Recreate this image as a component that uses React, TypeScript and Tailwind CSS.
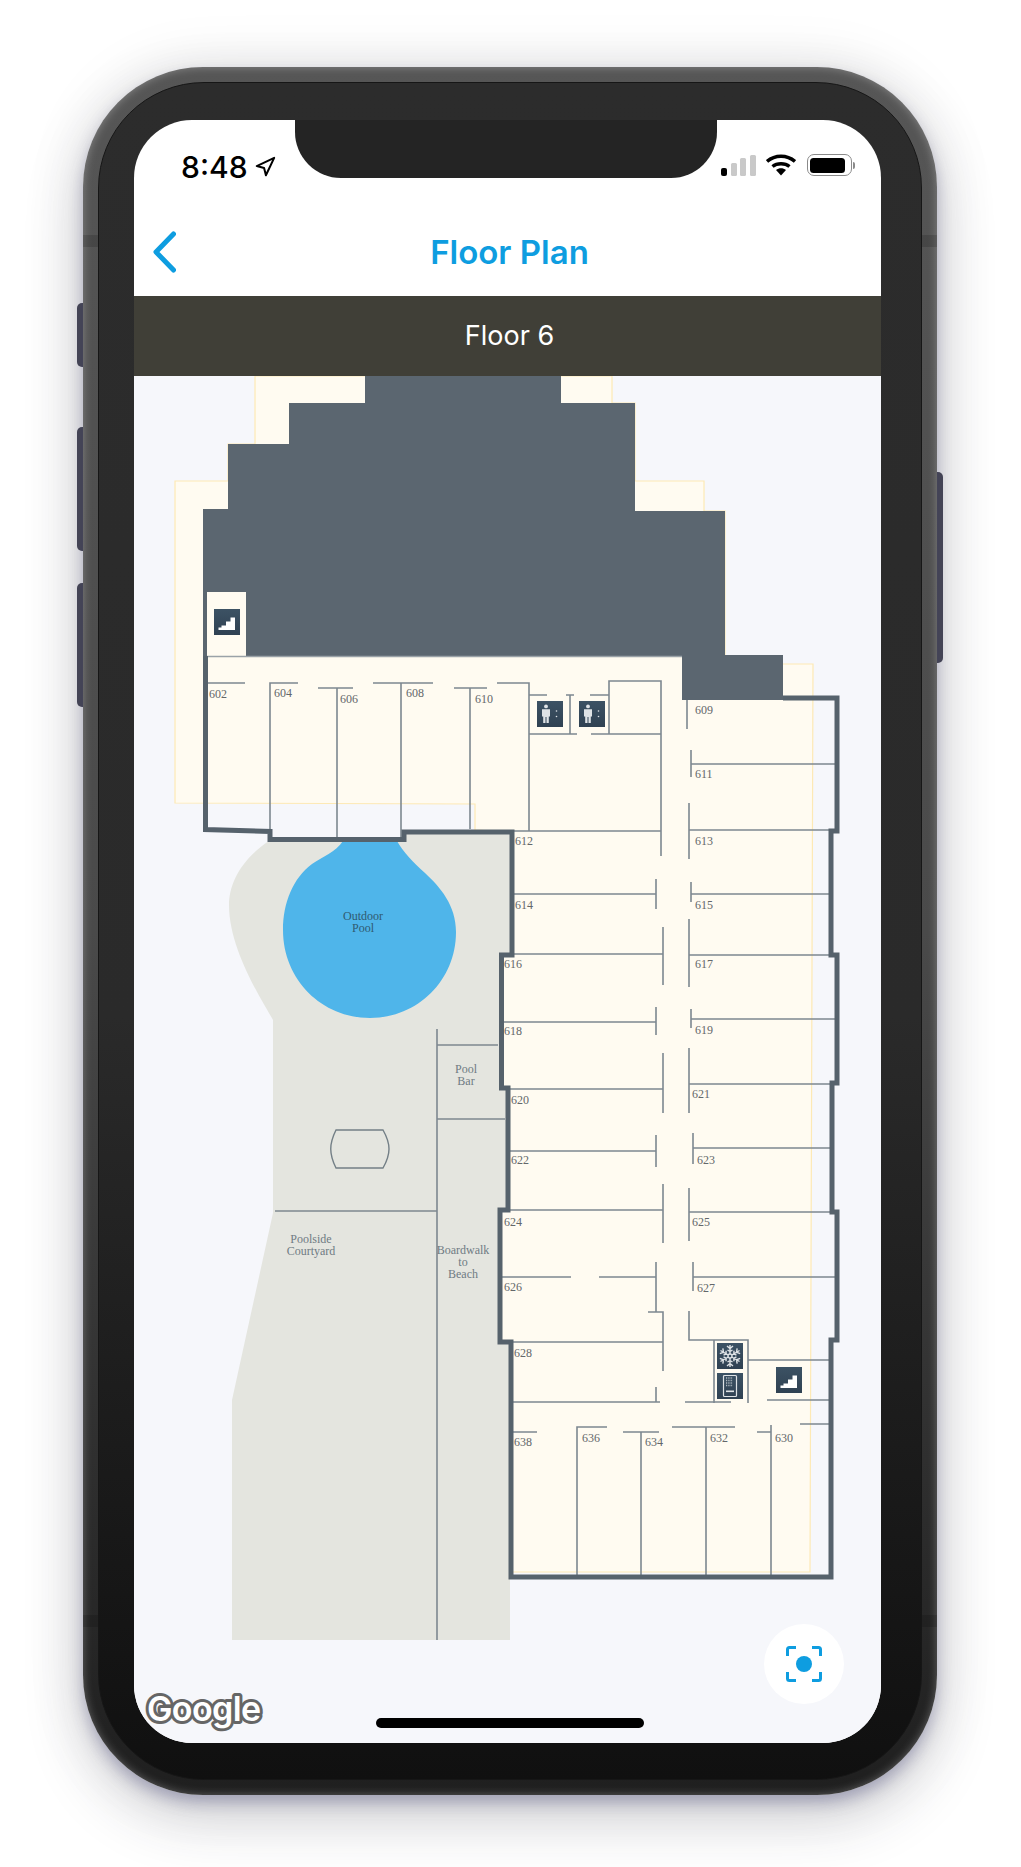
import React from 'react';
import { Navigation } from 'lucide-react';

// map svg uses page coordinates, viewBox starts at the map's top left corner
const cream =
  '255,376 612,376 612,403 635,403 635,481 704,481 704,511 725,511 725,664 813,664 810,1572 510,1572 510,1342 499,1342 499,1210 507,1210 507,1088 500,1088 500,955 511,955 511,832 475,830 475,804 175,803 175,481 228,481 228,444 255,444';
const building =
  '365,376 561,376 561,403 635,403 635,511 725,511 725,655 783,655 783,700 682,700 682,656 203,656 203,509 228,509 228,444 289,444 289,403 365,403';
const courtyard =
  'M269 841 C240 860 229 885 229 905 C229 950 262 1000 273 1020 V1213 L232 1400 V1640 H510 V1200 H512 V832 H404 V841 Z';
const pool =
  'M343 841 C336 852 322 857 312 864 C293 878 283 903 283 930 C283 980 322 1018 370 1018 C418 1018 456 980 456 932 C456 905 440 887 425 873 C413 862 403 852 397 841 Z';
const outerWall =
  'M205.5 656 V829.5 L270 831.5 V839.5 H404 V832 H512 V955 H501.5 V1088 H508 V1210 H500 V1342 H511 V1577 H831 V1340 H837 V1212 H832 V1083 H837 V955 H831 V831 H837 V698 H783';
const innerWalls = [
  'M207 683 H245 M270 829 V683 H298 M318 688 H353 M337 688 V838 M373 683 H433 M401 683 V838 M454 688 H487 M470 688 V829 M497 683 H529 V831',
  'M529 695 H547 M529 734 H577 M566 695 H574 M570 695 V734 M591 734 H661 M590 695 H609 M609 734 V681 H661 V856 M512 831 H661',
  'M687 700 V729 M691 750 V777 M691 764 H835 M689 803 V859 M689 830 H830 M656 879 V909 M514 894 H656 M691 882 V902 M691 894 H829',
  'M663 927 V985 M502 954 H663 M689 919 V987 M689 955 H829 M656 1007 V1035 M502 1022 H656 M691 1009 V1028 M691 1019 H835',
  'M663 1053 V1113 M509 1089 H663 M689 1048 V1113 M689 1084 H830 M656 1135 V1167 M509 1151 H656 M693 1133 V1164 M693 1148 H830',
  'M663 1184 V1243 M503 1210 H663 M689 1188 V1241 M689 1212 H830 M502 1277 H571 M599 1277 H656 M656 1262 V1312 M648 1312 H663 V1371 M512 1342 H663',
  'M693 1262 V1291 M693 1277 H835 M689 1311 V1340 H748 V1403 M714 1340 V1403 M685 1402 H731 M748 1360 H829 M767 1400 H829 M512 1402 H660 M656 1387 V1402',
  'M512 1432 H537 M607 1427 H577 V1576 M623 1432 H659 M641 1432 V1576 M672 1427 H735 M706 1427 V1576 M757 1432 H771 M771 1425 V1576 M800 1424 H829',
  'M437 1029 V1640 M437 1045 H498 M437 1119 H505 M275 1211 H437',
].join(' ');

const rooms: [string, number, number][] = [
  ['602', 209, 698], ['604', 274, 697], ['606', 340, 703], ['608', 406, 697], ['610', 475, 703],
  ['612', 515, 845], ['609', 695, 714], ['611', 695, 778], ['613', 695, 845], ['614', 515, 909],
  ['615', 695, 909], ['616', 504, 968], ['617', 695, 968], ['618', 504, 1035], ['619', 695, 1034],
  ['620', 511, 1104], ['621', 692, 1098], ['622', 511, 1164], ['623', 697, 1164], ['624', 504, 1226],
  ['625', 692, 1226], ['626', 504, 1291], ['627', 697, 1292], ['628', 514, 1357], ['638', 514, 1446],
  ['636', 582, 1442], ['634', 645, 1446], ['632', 710, 1442], ['630', 775, 1442],
];

const places: [string, number, number][] = [
  ['Outdoor', 363, 920], ['Pool', 363, 932],
  ['Pool', 466, 1073], ['Bar', 466, 1085],
  ['Poolside', 311, 1243], ['Courtyard', 311, 1255],
  ['Boardwalk', 463, 1254], ['to', 463, 1266], ['Beach', 463, 1278],
];

function Tile({ x, y, children }: { x: number; y: number; children: React.ReactNode }) {
  return (
    <g transform={`translate(${x} ${y})`}>
      <rect width="26" height="26" fill="url(#tile)" />
      {children}
    </g>
  );
}

const Stairs = () => (
  <polygon points="4.5,21 21,21 21,8.5 16.5,8.5 16.5,12.5 12,12.5 12,16.5 7.5,16.5 7.5,18.5 4.5,18.5" fill="#fff" />
);

const Person = () => (
  <g fill="#dfe3e6">
    <circle cx="9" cy="5.4" r="1.9" />
    <path d="M5 8.2 H13 V15.5 H11.8 V22 H9.5 V16 H8.5 V22 H6.2 V15.5 H5 Z" />
    <circle cx="19.5" cy="10" r="0.8" />
    <circle cx="19.5" cy="15.5" r="0.8" />
  </g>
);

const Flake = () => (
  <g stroke="#dfe3e6" strokeWidth="1.4" fill="none" transform="translate(13 13)">
    {[0, 60, 120, 180, 240, 300].map((deg) => (
      <g key={deg} transform={`rotate(${deg})`}>
        <path d="M0 -2 V-11 M-3 -10 L0 -7.5 L3 -10 M-2.5 -6 L0 -4.5 L2.5 -6" />
      </g>
    ))}
    <circle r="2" />
  </g>
);

const Vending = () => (
  <g>
    <rect x="6.5" y="2.5" width="13" height="21" rx="1" fill="none" stroke="#dfe3e6" strokeWidth="1.2" />
    <path d="M9 5 H16 M9 7.5 H16 M9 10 H16 M9 12.5 H16" stroke="#aeb8bf" strokeWidth="1.4" strokeDasharray="1.2 1.1" />
    <rect x="9" y="17.5" width="8" height="1.6" fill="#dfe3e6" />
  </g>
);

function FloorMap() {
  return (
    <svg viewBox="134 376 747 1367" className="block w-full h-full">
      <defs>
        <linearGradient id="tile" x1="0" y1="0" x2="0" y2="1">
          <stop offset="0" stopColor="#3c5264" />
          <stop offset="1" stopColor="#2f4152" />
        </linearGradient>
      </defs>
      <path d={courtyard} fill="#e4e5df" />
      <path d={pool} fill="#4fb5ea" />
      <polygon points={cream} fill="#fffbf1" stroke="#fde9b5" strokeWidth="1.2" />
      <polygon points={building} fill="#5b6670" />
      <rect x="207" y="592" width="39" height="64" fill="#fffbf1" />
      <path d="M207 656.5 H682" stroke="#9aa2a8" strokeWidth="1.5" />
      <path d={innerWalls} fill="none" stroke="#7d8890" strokeWidth="1.6" />
      <path d={outerWall} fill="none" stroke="#56626c" strokeWidth="5" />
      <path d="M336 1130 H383 C391 1144 391 1154 383 1168 H336 C329 1154 329 1144 336 1130 Z" fill="none" stroke="#737f86" strokeWidth="1.4" />

      <Tile x={214} y={609}><Stairs /></Tile>
      <Tile x={537} y={701}><Person /></Tile>
      <Tile x={579} y={701}><Person /></Tile>
      <Tile x={717} y={1343}><Flake /></Tile>
      <Tile x={717} y={1373}><Vending /></Tile>
      <Tile x={776} y={1367}><Stairs /></Tile>

      <g fontFamily="'Liberation Serif', serif" fontSize="12" fill="#63676a">
        {rooms.map(([label, x, y]) => (
          <text key={label} x={x} y={y}>{label}</text>
        ))}
      </g>
      <g fontFamily="'Liberation Serif', serif" fontSize="12" fill="#6f7b83" textAnchor="middle">
        {places.map(([label, x, y]) => (
          <text key={`${label}-${y}`} x={x} y={y} fill={y < 940 ? '#2f5a70' : undefined}>{label}</text>
        ))}
      </g>

      <text
        x="147"
        y="1721"
        fontFamily="Inter, sans-serif"
        fontWeight="600"
        fontSize="34"
        letterSpacing="-0.6"
        fill="#fff"
        stroke="#666"
        strokeWidth="6"
        strokeLinejoin="round"
        paintOrder="stroke"
      >
        Google
      </text>
    </svg>
  );
}

function StatusBar() {
  return (
    <div className="h-[88px] flex items-start justify-between pl-[47px] pr-[26px] pt-[32px] shrink-0">
      <div className="flex items-center gap-[6px]">
        <span className="text-[30px] leading-[30px] font-medium text-black font-['Inter',sans-serif]">8:48</span>
        <Navigation size={22} strokeWidth={2.2} className="text-black" />
      </div>
      <div className="flex items-end h-[23px] mt-[1px]">
        <div className="flex items-end gap-[3.4px]">
          <div className="w-[6px] h-[8px] rounded-[2px] bg-black" />
          <div className="w-[6px] h-[13px] rounded-[1.5px] bg-[#c9c9c9]" />
          <div className="w-[6px] h-[18px] rounded-[1.5px] bg-[#c9c9c9]" />
          <div className="w-[6px] h-[21px] rounded-[1.5px] bg-[#c9c9c9]" />
        </div>
        <svg viewBox="0 0 30 22" className="w-[30px] h-[22px] ml-[10px]">
          <path d="M15 21.5 L10 16 C13 13.8 17 13.8 20 16 Z" fill="#000" />
          <path d="M6.5 12.5 C11 8.8 19 8.8 23.5 12.5" fill="none" stroke="#000" strokeWidth="3.4" />
          <path d="M1 7.5 C9 0.5 21 0.5 29 7.5" fill="none" stroke="#000" strokeWidth="3.6" />
        </svg>
        <div className="flex items-center ml-[11px]">
          <div className="w-[45px] h-[22px] rounded-[7px] border-[1.5px] border-[#8a8a8a] p-[2.5px]">
            <div className="w-[35px] h-full rounded-[3.5px] bg-black" />
          </div>
          <div className="w-[2.5px] h-[7px] rounded-r-[2px] bg-[#8a8a8a] ml-[1px]" />
        </div>
      </div>
    </div>
  );
}

export default function App() {
  return (
    <div className="relative w-[1021px] h-[1867px] bg-white pt-[67px] pl-[83px] overflow-hidden">
      <div className="relative w-[854px] h-[1728px]">
        {/* side buttons */}
        <div className="absolute left-[-6px] top-[236px] w-[8px] h-[64px] rounded-l-[5px] bg-[#4a4a58]" />
        <div className="absolute left-[-6px] top-[360px] w-[8px] h-[124px] rounded-l-[5px] bg-[#4a4a58]" />
        <div className="absolute left-[-6px] top-[516px] w-[8px] h-[124px] rounded-l-[5px] bg-[#4a4a58]" />
        <div className="absolute right-[-6px] top-[405px] w-[8px] h-[191px] rounded-r-[5px] bg-[#4a4a58]" />

        {/* rim */}
        <div className="relative w-full h-full rounded-[120px] p-[15px] bg-gradient-to-b from-[#565656] via-[#4a4a4a] to-[#1f1f1f] shadow-[0_8px_14px_rgba(80,80,130,0.35),0_24px_60px_rgba(40,40,60,0.2),0_0_60px_rgba(0,0,0,0.1),inset_0_0_10px_rgba(255,255,255,0.3)]">
          {/* antenna bands */}
          <div className="absolute left-0 right-0 top-[168px] h-[12px] bg-black/15" />
          <div className="absolute left-0 right-0 top-[1548px] h-[12px] bg-black/15" />

          {/* body */}
          <div className="relative w-full h-full rounded-[106px] border border-[#161616] bg-gradient-to-b from-[#2c2c2c] via-[#2a2a2a] via-55% to-[#101010] pt-[37px] pb-[36px] pl-[35px] pr-[40px]">
            {/* screen */}
            <div className="relative w-full h-full rounded-[58px] overflow-hidden bg-white flex flex-col">
              <StatusBar />

              <div className="h-[88px] shrink-0 grid grid-cols-[1fr_auto_1fr] items-center pl-[18px] pr-[14px]">
                <svg viewBox="0 0 24 42" className="w-[24px] h-[42px]">
                  <path d="M21.5 3 L4 21 L21.5 39" fill="none" stroke="#0e9de0" strokeWidth="5" strokeLinecap="round" strokeLinejoin="round" />
                </svg>
                <h1 className="text-[33px] leading-[40px] font-semibold text-[#0e9de0] font-['Inter',sans-serif]">Floor Plan</h1>
                <div />
              </div>

              <div className="h-[80px] shrink-0 bg-[#403f37] flex items-center justify-center pl-[4px] pt-[1px]">
                <span className="text-[27px] font-normal text-white font-['Inter',sans-serif]">Floor 6</span>
              </div>

              <div className="relative flex-1 min-h-0 bg-[#f6f7fb]">
                <FloorMap />
                {/* recenter button */}
                <div className="absolute right-[37px] bottom-[39px] w-[80px] h-[80px] rounded-full bg-white flex items-center justify-center">
                  <svg viewBox="0 0 36 36" className="w-[36px] h-[36px]">
                    <path
                      d="M1.5 10 V3.5 Q1.5 1.5 3.5 1.5 H10 M26 1.5 H32.5 Q34.5 1.5 34.5 3.5 V10 M34.5 26 V32.5 Q34.5 34.5 32.5 34.5 H26 M10 34.5 H3.5 Q1.5 34.5 1.5 32.5 V26"
                      fill="none"
                      stroke="#0e9de0"
                      strokeWidth="3"
                    />
                    <circle cx="18" cy="18" r="8" fill="#0e9de0" />
                  </svg>
                </div>
                {/* home indicator */}
                <div className="absolute left-[242px] bottom-[15px] w-[268px] h-[10px] rounded-full bg-black" />
              </div>

              {/* notch */}
              <div className="absolute left-[161px] top-0 w-[422px] h-[58px] rounded-b-[46px] bg-[#242424]" />
            </div>
          </div>
        </div>
      </div>
    </div>
  );
}
